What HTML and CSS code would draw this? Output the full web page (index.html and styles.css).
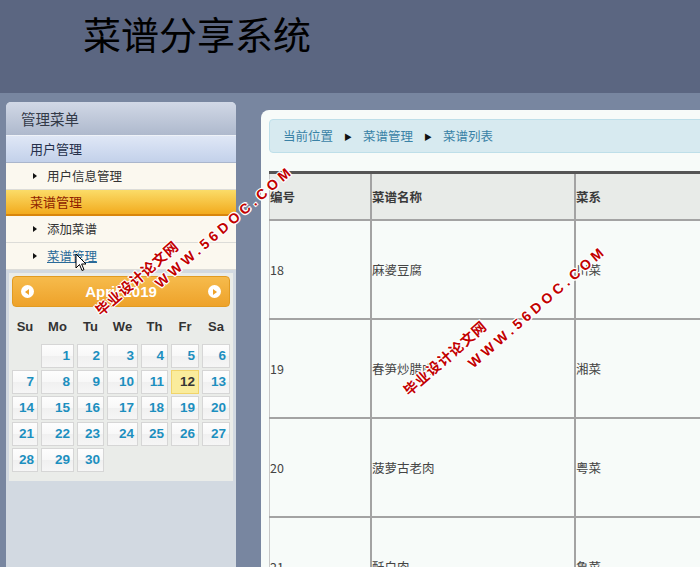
FILE: index.html
```html
<html>

<head>
    <meta http-equiv="Content-Type" content="text/html" charset="utf-8">
    <title>菜谱分享系统 - 菜谱列表</title>
    <link rel="stylesheet" href="styles.css">
</head>

<body>
    <div class="top">
        <h1 class="logo">菜谱分享系统</h1>
    </div>

    <div class="wrap">
        <div class="side">
            <div class="side-title">管理菜单</div>
            <div class="group">用户管理</div>
            <ul class="items">
                <li><span class="dot"></span>用户信息管理</li>
            </ul>
            <div class="group active">菜谱管理</div>
            <ul class="items">
                <li><span class="dot"></span>添加菜谱</li>
                <li><span class="dot"></span><a class="cur">菜谱管理</a></li>
            </ul>

            <!-- datepicker -->
            <div class="cal">
                <div class="cal-head">
                    <span class="nav prev"></span>
                    <span class="month">April 2019</span>
                    <span class="nav next"></span>
                </div>
                <div class="cal-week">
                    <span>Su</span><span>Mo</span><span>Tu</span><span>We</span><span>Th</span><span>Fr</span><span>Sa</span>
                </div>
                <div class="cal-days">
                    <span class="empty"></span>
                    <span>1</span><span>2</span><span>3</span><span>4</span><span>5</span><span>6</span>
                    <span>7</span><span>8</span><span>9</span><span>10</span><span>11</span><span class="today">12</span><span>13</span>
                    <span>14</span><span>15</span><span>16</span><span>17</span><span>18</span><span>19</span><span>20</span>
                    <span>21</span><span>22</span><span>23</span><span>24</span><span>25</span><span>26</span><span>27</span>
                    <span>28</span><span>29</span><span>30</span>
                </div>
            </div>
        </div>

        <div class="main">
            <div class="crumb">
                当前位置<span class="arr">&#9654;</span>菜谱管理<span class="arr">&#9654;</span>菜谱列表
            </div>
            <table class="list">
                <tr>
                    <th class="c1">编号</th>
                    <th class="c2">菜谱名称</th>
                    <th>菜系</th>
                </tr>
                <tr>
                    <td>18</td>
                    <td>麻婆豆腐</td>
                    <td>川菜</td>
                </tr>
                <tr>
                    <td>19</td>
                    <td>春笋炒腊肉</td>
                    <td>湘菜</td>
                </tr>
                <tr>
                    <td>20</td>
                    <td>菠萝古老肉</td>
                    <td>粤菜</td>
                </tr>
                <tr>
                    <td>21</td>
                    <td>酥白肉</td>
                    <td>鲁菜</td>
                </tr>
            </table>
        </div>
    </div>

    <!-- mouse pointer over the menu link -->
    <svg class="pointer" width="12" height="19" viewBox="0 0 12 19">
        <path d="M1 1 L1 15 L4.5 11.5 L7 17.5 L9 16.6 L6.6 11 L11 11 Z" fill="#fff" stroke="#000" stroke-width="1" stroke-linejoin="round" />
    </svg>

    <!-- watermark -->
    <div class="wm">
        <span class="wm-cn" style="left:97px;top:304px">毕业设计论文网</span>
        <span class="wm-en" style="left:157px;top:277px">WWW.56DOC.COM</span>
        <span class="wm-cn" style="left:405px;top:384px">毕业设计论文网</span>
        <span class="wm-en" style="left:470px;top:357px">WWW.56DOC.COM</span>
    </div>
</body>

</html>
```

FILE: styles.css
```css
body {
    margin: 0;
    height: 567px;
    overflow: hidden;
    background-color: #7886a0;
    font-family: "Noto Sans CJK SC", sans-serif;
    position: relative;
}

.top {
    height: 93px;
    background-color: #5b6681;
    display: flex;
    align-items: flex-start;
}

.logo {
    margin: 9px 0 0 83px;
    font-size: 38px;
    font-weight: normal;
    color: #000;
    line-height: 48px;
}

.wrap {
    display: flex;
    align-items: flex-start;
    height: 474px;
    overflow: hidden;
}

/* left menu */
.side {
    width: 230px;
    margin: 9px 0 0 6px;
    height: 465px;
    background-color: #d2d9e1;
    border-radius: 5px 5px 0 0;
    flex-shrink: 0;
}

.side-title {
    height: 33px;
    line-height: 33px;
    padding-left: 15px;
    font-size: 14.5px;
    color: #333a48;
    border-radius: 5px 5px 0 0;
    background: linear-gradient(#d1d8e6, #aeb9cd);
    border-bottom: 1px solid #eef2f8;
}

.group {
    height: 26px;
    line-height: 26px;
    padding-left: 24px;
    font-size: 13px;
    color: #25304a;
    background: linear-gradient(#dfe7f6, #c3d1ea);
    border-bottom: 1px solid #aab6cc;
}

.group.active {
    height: 24px;
    line-height: 24px;
    color: #8e1e00;
    background: linear-gradient(#fbdc68, #f2ab1e);
    border-bottom: 2px solid #d8860c;
}

.items {
    list-style: none;
    margin: 0;
    padding: 0;
    background-color: #fbf8ef;
}

.items li {
    height: 26px;
    line-height: 26px;
    padding-left: 27px;
    font-size: 12.5px;
    color: #333;
    border-bottom: 1px solid #dcdcd8;
    display: flex;
    align-items: center;
}

.dot {
    width: 0;
    height: 0;
    border-top: 3.5px solid transparent;
    border-bottom: 3.5px solid transparent;
    border-left: 4px solid #111;
    margin-right: 10px;
}

.cur {
    color: #2a6a98;
    text-decoration: underline;
}

/* datepicker */
.cal {
    margin: 3px 3px 0 3px;
    padding: 3px;
    background-color: #eaece9;
    font-family: "Liberation Sans", Arial, sans-serif;
}

.cal-head {
    height: 29px;
    border: 1px solid #e19b22;
    border-radius: 4px;
    background: linear-gradient(#f6bb4c, #eea22a);
    display: flex;
    align-items: center;
    justify-content: space-between;
    padding: 0 8px;
}

.month {
    color: #fff;
    font-weight: bold;
    font-size: 15px;
}

.nav {
    width: 13px;
    height: 13px;
    border-radius: 50%;
    background-color: #fff;
    position: relative;
}

.nav::after {
    content: "";
    position: absolute;
    top: 3.5px;
    border-top: 3px solid transparent;
    border-bottom: 3px solid transparent;
}

.prev::after {
    left: 3.5px;
    border-right: 4px solid #eea22a;
}

.next::after {
    left: 5px;
    border-left: 4px solid #eea22a;
}

.cal-week,
.cal-days {
    display: grid;
    grid-template-columns: 26px 33px 27px 31px 27px 28px 28px;
    column-gap: 3px;
}

.cal-week {
    margin-top: 5px;
    height: 28px;
    align-items: center;
}

.cal-week span {
    text-align: center;
    font-weight: bold;
    font-size: 13px;
    color: #333;
}

.cal-days {
    margin-top: 4px;
    row-gap: 2px;
    padding-bottom: 6px;
}

.cal-days span {
    height: 22px;
    line-height: 22px;
    border: 1px solid #d6d6d6;
    background: linear-gradient(#fdfdfd 0%, #f8f8f8 50%, #f0f0f0 51%, #f6f6f6 100%);
    text-align: right;
    padding-right: 3px;
    font-weight: bold;
    font-size: 13.5px;
    color: #1c8fbf;
}

.cal-days span.empty {
    border: 0;
    background: none;
}

.cal-days span.today {
    background: #faec9c;
    border-color: #f1d46a;
    color: #363636;
}

/* content */
.main {
    margin: 17px 0 0 25px;
    flex: 1;
    min-width: 500px;
    height: 457px;
    overflow: hidden;
    background-color: #f7fbf9;
    border-radius: 8px 0 0 0;
    padding: 9px 0 0 8px;
}

.crumb {
    height: 32px;
    line-height: 32px;
    background-color: #d7eaf0;
    border: 1px solid #bedfe9;
    border-radius: 4px 0 0 4px;
    padding-left: 13px;
    font-size: 12.5px;
    color: #3a82a6;
}

.arr {
    font-size: 8px;
    color: #111;
    margin: 0 11px 0 11px;
    vertical-align: 1px;
}

.list {
    margin-top: 18px;
    width: 720px;
    border-collapse: collapse;
    border-top: 3px solid #555;
    font-size: 12.5px;
    color: #444;
}

.list th,
.list td {
    border: 2px solid #a3a3a3;
    border-left: 2px solid #8c8c8c;
    text-align: left;
    padding: 0;
    vertical-align: middle;
}

.list th {
    height: 47px;
    background-color: #e8ebe8;
    font-weight: bold;
    color: #3a3a3a;
}

.list td {
    height: 99px;
}

.list tr > *:first-child {
    border-left: 1px solid #c8c8c8;
}

.c1 {
    width: 100px;
}

.c2 {
    width: 202px;
}

/* overlay bits */
.pointer {
    position: absolute;
    left: 75px;
    top: 253px;
}

.wm span {
    position: absolute;
    white-space: nowrap;
    line-height: 16px;
    transform: rotate(-41deg);
    transform-origin: 0 8px;
    color: #c20000;
    font-weight: bold;
    text-shadow: 1px 1px 0 #fff, -1px -1px 0 #fff, 1px -1px 0 #fff, -1px 1px 0 #fff, 0 0 2px #fff;
}

.wm-cn {
    font-size: 14px;
    letter-spacing: 1px;
}

.wm-en {
    font-family: "Liberation Sans", Arial, sans-serif;
    font-size: 14px;
    letter-spacing: 4px;
}
```
